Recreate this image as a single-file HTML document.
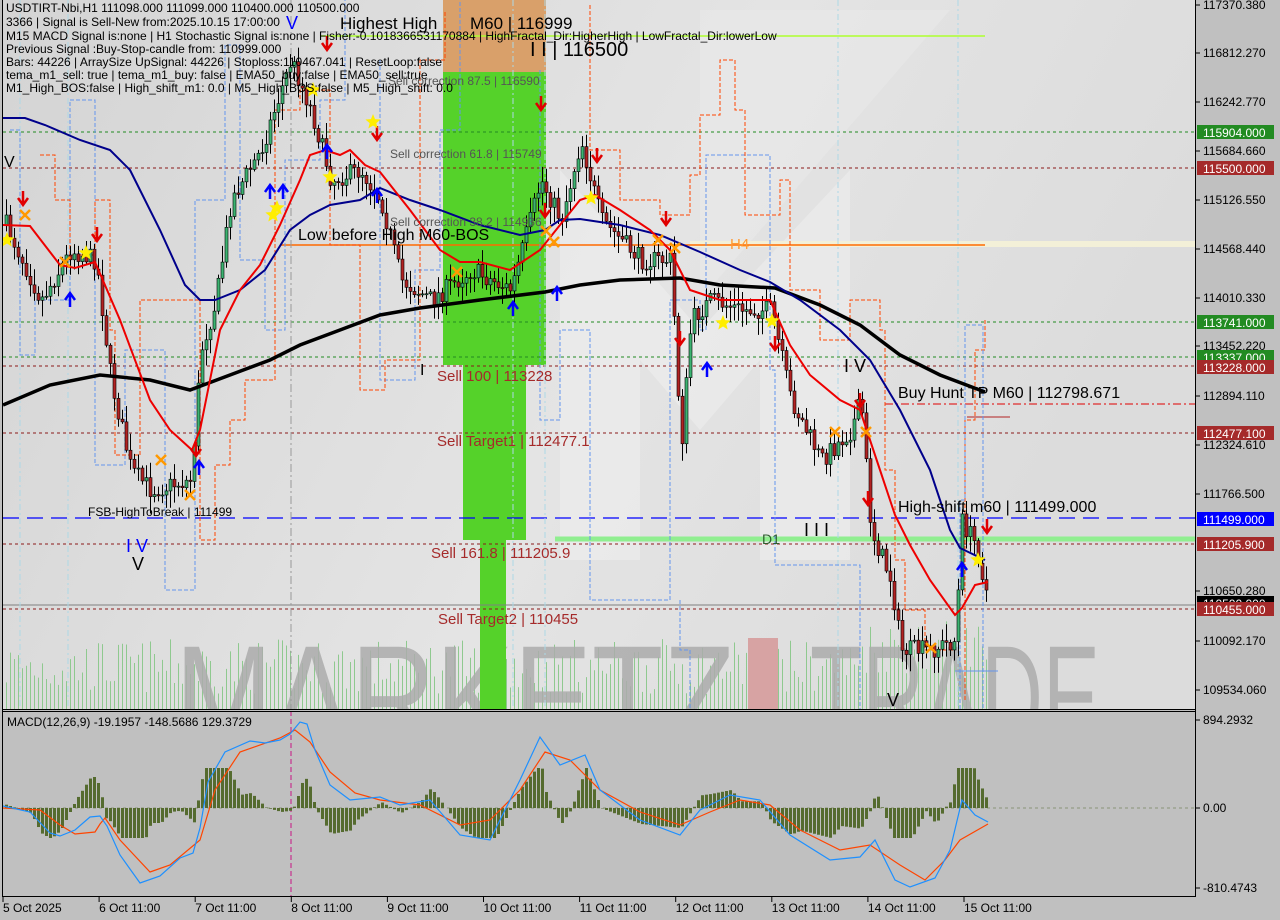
<!DOCTYPE html>
<html><head><meta charset="utf-8"><style>
html,body{margin:0;padding:0;width:1280px;height:920px;overflow:hidden;background:#c0c0c0;font-family:"Liberation Sans",sans-serif}
svg{position:absolute;left:0;top:0}
</style></head><body>
<svg id="s" width="1280" height="920" xmlns="http://www.w3.org/2000/svg" font-family="Liberation Sans, sans-serif">
<defs>
<linearGradient id="bg" x1="0" y1="0" x2="1" y2="0.3"><stop offset="0" stop-color="#d4d4d4"/><stop offset="0.6" stop-color="#e4e4e4"/><stop offset="1" stop-color="#dcdcdc"/></linearGradient>
<clipPath id="main"><rect x="3" y="0" width="1192" height="709"/></clipPath>
<clipPath id="mc"><rect x="3" y="711" width="1192" height="186"/></clipPath>
</defs>
<rect x="0" y="0" width="1280" height="920" fill="#c0c0c0"/>
<rect x="3" y="0" width="1192" height="709" fill="url(#bg)"/>
<g clip-path="url(#main)">
<path d="M560 170 L700 330 L850 170 L850 560 L760 560 L760 360 L700 430 L640 360 L640 560 L560 560 Z" fill="#ececec" opacity="0.7"/>
<path d="M700 10 L950 10 L700 300 Z" fill="#e9e9e9" opacity="0.6"/>
<g id="vol" stroke="#8fc98f"></g>
<text x="175" y="750" font-size="150" fill="#acacac" opacity="0.85" textLength="560" lengthAdjust="spacingAndGlyphs">MARKETZ</text>
<rect x="748" y="638" width="30" height="71" fill="#d7a3a3"/>
<text x="810" y="750" font-size="150" fill="#acacac" opacity="0.85" textLength="290" lengthAdjust="spacingAndGlyphs">TRADE</text>
<rect x="443" y="0" width="103" height="72" fill="#d9a06a"/>
<rect x="443" y="72" width="103" height="293" fill="#55d22a"/>
<rect x="463" y="365" width="63" height="175" fill="#55d22a"/>
<rect x="480" y="540" width="26" height="169" fill="#55d22a"/>
<line x1="320" y1="36" x2="985" y2="36" stroke="#adff2f" stroke-width="1.5"/>
<line x1="3" y1="132" x2="1195" y2="132" stroke="#228b22" stroke-dasharray="3,3"/>
<line x1="3" y1="168" x2="1195" y2="168" stroke="#8b1a1a" stroke-dasharray="3,3"/>
<rect x="690" y="241" width="505" height="6" fill="#f3f0d8"/>
<line x1="280" y1="245" x2="985" y2="245" stroke="#ff6a00" stroke-width="1.5"/>
<line x1="3" y1="322" x2="1195" y2="322" stroke="#228b22" stroke-dasharray="3,3"/>
<line x1="3" y1="357" x2="1195" y2="357" stroke="#228b22" stroke-dasharray="3,3"/>
<line x1="3" y1="366" x2="1195" y2="366" stroke="#8b1a1a" stroke-dasharray="3,3"/>
<line x1="885" y1="404" x2="1195" y2="404" stroke="#e00000" stroke-dasharray="8,3,2,3"/>
<line x1="3" y1="433" x2="1195" y2="433" stroke="#8b1a1a" stroke-dasharray="3,3"/>
<line x1="3" y1="518" x2="1195" y2="518" stroke="#0000ff" stroke-width="1.2" stroke-dasharray="16,8"/>
<line x1="555" y1="539" x2="1195" y2="539" stroke="#90ee90" stroke-width="5"/>
<line x1="3" y1="544" x2="1195" y2="544" stroke="#8b1a1a" stroke-dasharray="3,3"/>
<line x1="3" y1="605" x2="1195" y2="605" stroke="#808080"/>
<line x1="3" y1="609" x2="1195" y2="609" stroke="#8b1a1a" stroke-dasharray="3,3"/>
<line x1="967" y1="417" x2="1010" y2="417" stroke="#b22222"/>
<line x1="955" y1="671" x2="998" y2="671" stroke="#6495ed"/>
<line x1="291" y1="0" x2="291" y2="709" stroke="#999" stroke-dasharray="8,3,2,3"/>
<g id="vert" stroke="#add8e6" stroke-dasharray="6,3,2,3"></g>
<polyline fill="none" stroke="#6495ed" stroke-dasharray="4,2" points="10,130 20,130 20,355 35,355 35,300 70,300 70,100 95,100 95,465 125,465 125,350 165,350 165,590 195,590 195,200 225,200 225,45 240,45 240,260 265,260 265,330 285,330 285,160 320,160 320,100 345,100 345,0"/>
<polyline fill="none" stroke="#6495ed" stroke-dasharray="4,2" points="380,60 380,380 415,380 415,270 440,270 440,130 460,130 460,0"/>
<polyline fill="none" stroke="#6495ed" stroke-dasharray="4,2" points="540,70 540,420 560,420 560,330 590,330 590,600 670,600 670,300 700,300 700,330 706,330 706,155 770,155 770,370 775,370 775,565 860,565 860,709"/>
<polyline fill="none" stroke="#6495ed" stroke-dasharray="4,2" points="680,600 680,650 690,650 690,709"/>
<polyline fill="none" stroke="#ff4500" stroke-dasharray="4,2" points="40,155 55,155 55,200 70,200 70,255 95,255 95,200 110,200 110,330 115,330 115,455 140,455 140,300 200,300 200,540 215,540 215,465 230,465 230,420 245,420 245,380 275,380 275,110 300,110 300,90 330,90 330,245 360,245 360,390 385,390 385,360 420,360 420,60 445,60 445,10"/>
<polyline fill="none" stroke="#ff4500" stroke-dasharray="4,2" points="590,5 590,150 620,150 620,200 660,200 660,215 690,215 690,175 700,175 700,115 720,115 720,60 735,60 735,110 745,110 745,215 780,215 780,180 790,180 790,290 820,290 820,340 850,340 850,300 880,300 880,330 885,330 885,470 895,470 895,560 905,560 905,610 925,610 925,650 955,650"/>
<polyline fill="none" stroke="#ff4500" stroke-dasharray="4,2" points="965,700 965,420 975,420 975,350 985,350 985,320"/>
<polyline fill="none" stroke="#6495ed" stroke-dasharray="4,2" points="960,709 960,500 965,500 965,325 983,325 983,709"/>
<g id="candles"></g>
<polyline fill="none" stroke="#000" stroke-width="3.5" points="3,405 50,385 100,375 150,380 190,390 230,375 270,360 300,345 340,330 380,315 420,308 480,300 545,292 580,285 620,280 680,278 720,285 775,288 820,305 860,325 900,355 940,375 985,392"/>
<polyline fill="none" stroke="#00008b" stroke-width="2" points="3,118 25,118 45,125 80,140 110,150 130,170 160,230 185,285 200,300 215,300 240,290 265,270 290,230 310,215 330,205 360,200 380,188 410,200 440,210 480,225 520,235 545,230 560,220 580,219 620,225 660,235 700,252 740,270 770,282 800,300 840,330 870,360 900,410 930,470 950,530 960,548 985,560"/>
<polyline fill="none" stroke="#ee0000" stroke-width="2" points="3,225 30,226 60,265 75,268 95,262 120,320 150,400 170,430 192,450 200,430 220,330 240,290 260,265 280,225 300,180 310,155 325,150 340,155 350,150 365,165 380,172 410,210 440,250 460,262 480,262 510,270 540,250 560,225 580,200 595,195 620,210 650,230 670,250 690,290 720,300 770,300 790,345 810,375 840,400 860,410 880,470 895,515 910,545 930,580 955,615 962,608 975,585 988,582"/>
<g id="marks"></g>
<text x="340" y="29" font-size="17" fill="#000">Highest High</text>
<text x="470" y="29" font-size="17" fill="#000">M60 | 116999</text>
<text x="286" y="29" font-size="18" fill="#0000ff">V</text>
<text x="530" y="56" font-size="20" fill="#000">I I | 116500</text>
<text x="388" y="85" font-size="12" fill="#555">Sell correction 87.5 | 116590</text>
<text x="390" y="158" font-size="12" fill="#555">Sell correction 61.8 | 115749</text>
<text x="390" y="226" font-size="12" fill="#555">Sell correction 38.2 | 114936</text>
<text x="298" y="240" font-size="16" fill="#000">Low before High   M60-BOS</text>
<text x="730" y="249" font-size="15" fill="#ff9933">H4</text>
<text x="437" y="381" font-size="15" fill="#a52a2a">Sell 100 | 113228</text>
<text x="420" y="375" font-size="16" fill="#000">I</text>
<text x="437" y="446" font-size="15" fill="#a52a2a">Sell Target1 | 112477.1</text>
<text x="431" y="558" font-size="15" fill="#a52a2a">Sell 161.8 | 111205.9</text>
<text x="438" y="624" font-size="15" fill="#a52a2a">Sell Target2 | 110455</text>
<text x="88" y="516" font-size="12" fill="#000">FSB-HighToBreak | 111499</text>
<text x="126" y="552" font-size="18" fill="#0000ff">I V</text>
<text x="132" y="570" font-size="18" fill="#000">V</text>
<text x="4" y="167" font-size="16" fill="#000">V</text>
<text x="898" y="398" font-size="16" fill="#000">Buy Hunt TP M60 | 112798.671</text>
<text x="898" y="512" font-size="16" fill="#000">High-shift m60 | 111499.000</text>
<text x="804" y="536" font-size="18" fill="#000">I I I</text>
<text x="844" y="372" font-size="18" fill="#000">I V</text>
<text x="762" y="544" font-size="14" fill="#2e5e2e">D1</text>
<text x="887" y="706" font-size="18" fill="#000">V</text>
<g font-size="12" fill="#000">
<text x="6" y="12">USDTIRT-Nbi,H1  111098.000 111099.000 110400.000 110500.000</text>
<text x="6" y="26">3366 | Signal is Sell-New from:2025.10.15 17:00:00</text>
<text x="6" y="40">M15 MACD Signal is:none | H1 Stochastic Signal is:none | Fisher:-0.1018366531170884 | HighFractal_Dir:HigherHigh | LowFractal_Dir:lowerLow</text>
<text x="6" y="53">Previous Signal :Buy-Stop-candle from: 110999.000</text>
<text x="6" y="66">Bars: 44226 | ArraySize UpSignal: 44226 | Stoploss:110467.041 | ResetLoop:false</text>
<text x="6" y="79">tema_m1_sell: true | tema_m1_buy: false | EMA50_buy:false | EMA50_sell:true</text>
<text x="6" y="92">M1_High_BOS:false | High_shift_m1: 0.0 | M5_High_BOS:false | M5_High_shift: 0.0</text>
</g>
</g>
<g clip-path="url(#mc)">
<line x1="291" y1="711" x2="291" y2="897" stroke="#c71585" stroke-dasharray="5,3"/>
<line x1="3" y1="808" x2="1195" y2="808" stroke="#556b2f" stroke-dasharray="3,3" stroke-width="0.6"/>
<g id="hist" fill="#556b2f"></g>
<polyline id="sig" fill="none" stroke="#ff4500" stroke-width="1.2" points="3,808 40,810 60,825 75,834 95,832 100,824 105,818 120,840 150,872 170,865 200,840 215,790 240,752 280,738 295,730 310,742 330,772 355,793 380,800 420,805 460,825 490,820 520,790 545,752 570,760 600,790 640,812 680,825 710,812 740,800 770,805 800,830 840,850 870,845 900,865 925,880 945,860 960,840 988,824"/>
<polyline id="mac" fill="none" stroke="#1e90ff" stroke-width="1.2" points="3,806 30,812 50,833 60,836 75,830 90,817 100,816 107,826 120,855 140,883 160,876 180,858 193,853 200,828 208,782 225,752 250,741 265,743 280,740 290,734 300,722 307,724 315,750 330,785 350,800 380,797 400,805 430,800 460,835 490,840 520,780 540,737 560,765 585,755 600,790 640,820 680,835 700,810 730,795 760,800 790,835 830,860 860,857 875,840 895,880 910,887 935,878 950,850 962,800 975,815 988,822"/>
</g>
<text x="7" y="726" font-size="12" fill="#000">MACD(12,26,9) -19.1957 -148.5686 129.3729</text>
<line x1="2.5" y1="0" x2="2.5" y2="897" stroke="#000"/>
<line x1="1195.5" y1="0" x2="1195.5" y2="897" stroke="#000"/>
<line x1="2" y1="709.5" x2="1196" y2="709.5" stroke="#000"/>
<line x1="2" y1="711.5" x2="1196" y2="711.5" stroke="#000"/>
<line x1="2" y1="896.5" x2="1196" y2="896.5" stroke="#000"/>
<g id="axis" font-size="12" fill="#000"></g>
<g font-size="12" fill="#000" id="dates"></g>
</svg>
<script>
var NS="http://www.w3.org/2000/svg";
function el(p,t,a,txt){var e=document.createElementNS(NS,t);for(var k in a)e.setAttribute(k,a[k]);if(txt!=null)e.textContent=txt;document.getElementById(p).appendChild(e);return e;}
var seed=7;function rnd(){seed=(seed*16807)%2147483647;return seed/2147483647;}
var P=[[5,225],[40,300],[70,250],[95,260],[110,380],[130,470],[150,490],[190,480],[200,350],[215,300],[230,200],[260,150],[290,60],[310,110],[330,180],[360,170],[380,200],[400,280],[430,300],[470,270],[510,290],[540,180],[560,220],[580,140],[600,220],[640,260],[670,260],[680,450],[690,320],[710,300],[740,310],[770,310],[790,400],[820,460],[850,430],[860,400],[870,530],[890,580],[900,650],[930,650],[955,640],[960,520],[975,545],[988,605]];
function py(x){for(var i=0;i<P.length-1;i++){if(x>=P[i][0]&&x<=P[i+1][0]){var t=(x-P[i][0])/(P[i+1][0]-P[i][0]);return P[i][1]+t*(P[i+1][1]-P[i][1]);}}return P[P.length-1][1];}
var prev=py(5);
for(var x=5;x<=988;x+=4){var c=py(x)+(rnd()-0.5)*20;var o=prev;var hi=Math.min(o,c)-rnd()*15-2,lo=Math.max(o,c)+rnd()*15+2;
el("candles","line",{x1:x+1.5,x2:x+1.5,y1:hi,y2:lo,stroke:"#000"});
var up=c<o;el("candles","rect",{x:x,y:Math.min(o,c),width:3,height:Math.max(1,Math.abs(c-o)),fill:up?"#3cb371":"#b22222",stroke:"#000","stroke-width":0.6});prev=c;
var h=15+rnd()*55+(x>860?20:0);el("vol","line",{x1:x+1.5,x2:x+1.5,y1:709-h,y2:709});}
[[20,0,709],[68,0,709],[513,0,709],[545,0,709],[838,0,709],[958,0,709]].forEach(function(v){el("vert","line",{x1:v[0],x2:v[0],y1:v[1],y2:v[2]});});
function arrow(x,y,dn,col){var d=dn?"M"+(x-5)+" "+(y-2)+" L"+x+" "+(y+5)+" L"+(x+5)+" "+(y-2)+" M"+x+" "+(y-9)+" L"+x+" "+(y+5):"M"+(x-5)+" "+(y+2)+" L"+x+" "+(y-5)+" L"+(x+5)+" "+(y+2)+" M"+x+" "+(y+9)+" L"+x+" "+(y-5);el("marks","path",{d:d,stroke:col,"stroke-width":2.5,fill:"none"});}
[[23,200],[97,236],[196,451],[327,45],[377,135],[541,105],[545,212],[597,157],[666,220],[680,340],[775,345],[860,402],[868,500],[987,528]].forEach(function(a){arrow(a[0],a[1],true,"#e00000");});
[[70,298],[199,466],[270,190],[283,190],[327,150],[377,194],[513,307],[557,292],[707,368],[962,568]].forEach(function(a){arrow(a[0],a[1],false,"#0000ff");});
function star(x,y){var s="";for(var i=0;i<10;i++){var r=i%2?3.5:8,a=Math.PI/5*i-Math.PI/2;s+=(x+r*Math.cos(a))+","+(y+r*Math.sin(a))+" ";}el("marks","polygon",{points:s,fill:"#ffee00"});}
[[7,240],[86,253],[273,215],[277,208],[330,177],[373,122],[313,90],[591,198],[723,323],[772,321],[978,560]].forEach(function(a){star(a[0],a[1]);});
function cross(x,y){el("marks","path",{d:"M"+(x-5)+" "+(y-5)+"L"+(x+5)+" "+(y+5)+"M"+(x+5)+" "+(y-5)+"L"+(x-5)+" "+(y+5),stroke:"#ff9900","stroke-width":2.5});}
[[25,215],[65,262],[161,460],[190,495],[457,272],[546,231],[554,242],[658,240],[675,248],[835,432],[866,432],[931,648]].forEach(function(a){cross(a[0],a[1]);});
function pts(id){return document.getElementById(id).getAttribute("points").trim().split(/\s+/).map(function(p){return p.split(",").map(Number);});}
var S=pts("sig"),M=pts("mac");function interp(A,x){for(var i=0;i<A.length-1;i++)if(x>=A[i][0]&&x<=A[i+1][0]){var t=(x-A[i][0])/(A[i+1][0]-A[i][0]);return A[i][1]+t*(A[i+1][1]-A[i][1]);}return A[A.length-1][1];}
for(var x=5;x<=988;x+=4){var v=(interp(S,x)-interp(M,x))*2.0;v=Math.max(-30,Math.min(40,v));var y0=808;if(v>0)el("hist","rect",{x:x,y:y0-v,width:3,height:v});else el("hist","rect",{x:x,y:y0,width:3,height:-v});}
var ax=[[117370.380,5],[116812.270,53],[116242.770,102],[115684.660,151],[115126.550,200],[114568.440,249],[114010.330,298],[113452.220,346],[112894.110,396],[112324.610,445],[111766.500,494],[110650.280,591],[110092.170,641],[109534.060,690]];
ax.forEach(function(a){el("axis","line",{x1:1196,x2:1200,y1:a[1],y2:a[1],stroke:"#000"});el("axis","text",{x:1203,y:a[1]+4},a[0].toFixed(3));});
var bx=[["115904.000",132,"#228b22"],["115500.000",168,"#a52a2a"],["113741.000",322,"#228b22"],["113337.000",357,"#228b22"],["113228.000",367,"#a52a2a"],["112477.100",433,"#a52a2a"],["111499.000",519,"#0000ff"],["111205.900",544,"#a52a2a"],["110500.000",603,"#000"],["110455.000",609,"#a52a2a"]];
bx.forEach(function(b){el("axis","rect",{x:1197,y:b[1]-7,width:77,height:14,fill:b[2]});el("axis","text",{x:1203,y:b[1]+5,fill:"#fff"},b[0]);});
[["894.2932",724],["0.00",812],["-810.4743",892]].forEach(function(a){el("axis","line",{x1:1196,x2:1200,y1:a[1]-4,y2:a[1]-4,stroke:"#000"});el("axis","text",{x:1203,y:a[1]},a[0]);});
var ds=["5 Oct 2025","6 Oct 11:00","7 Oct 11:00","8 Oct 11:00","9 Oct 11:00","10 Oct 11:00","11 Oct 11:00","12 Oct 11:00","13 Oct 11:00","14 Oct 11:00","15 Oct 11:00"];
ds.forEach(function(d,i){var x=3+i*96.1;el("dates","line",{x1:x,x2:x,y1:897,y2:902,stroke:"#000"});el("dates","text",{x:x,y:912},d);});
</script>
</body></html>
